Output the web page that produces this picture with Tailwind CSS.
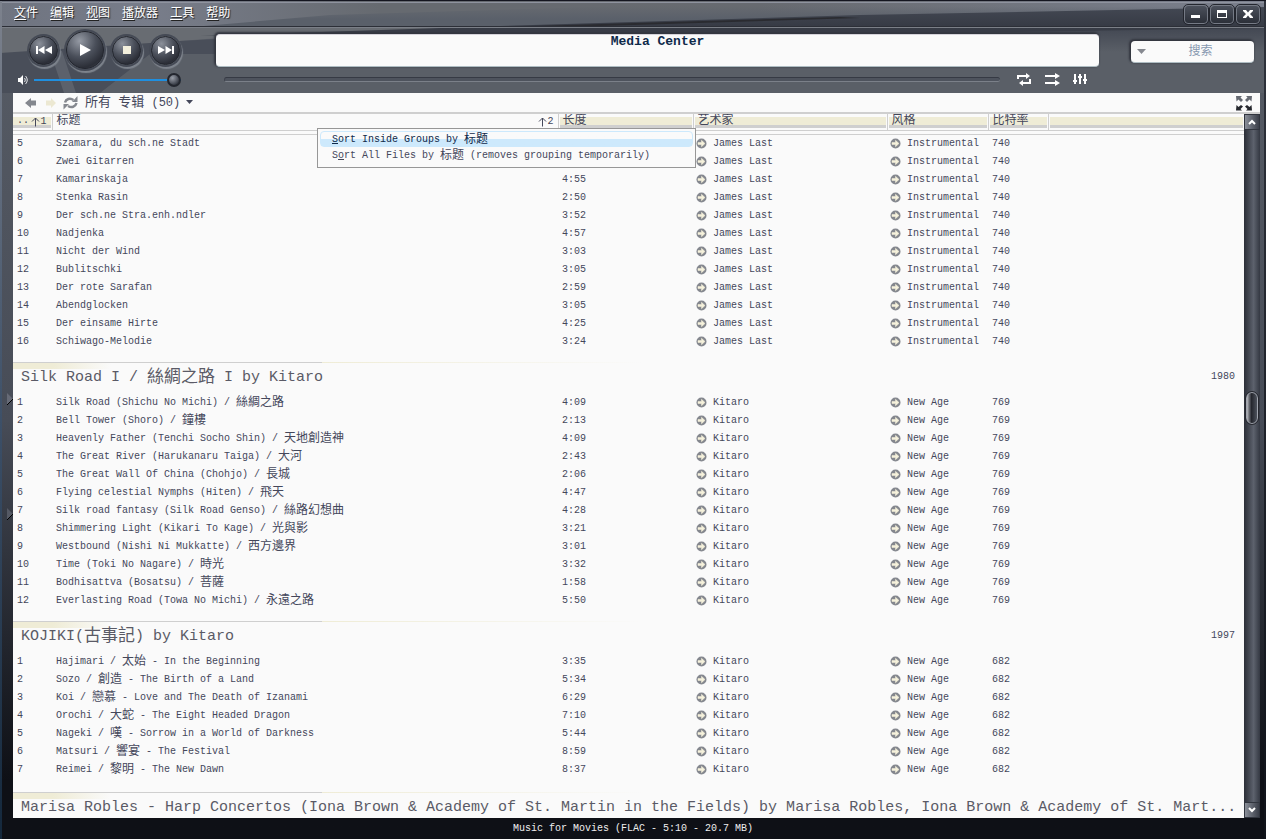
<!DOCTYPE html>
<html lang="zh-CN">
<head>
<meta charset="utf-8">
<title>Media Center</title>
<script src="https://cdn.jsdelivr.net/npm/@tailwindcss/browser@4"></script>
</head>
<body class="h-screen overflow-hidden bg-[#0e1016] font-['Liberation_Mono','Noto_Sans_CJK_SC',monospace] text-[10px] text-[#44475a]">
<div class="relative isolate flex h-full flex-col bg-linear-to-b from-[#585d66] via-[#474c57] via-50% to-[#0e1016] to-93% border-t border-[#14151f]">

  <svg class="absolute inset-x-0 top-0 -z-10 h-[92px] w-full" viewBox="0 0 1266 92" preserveAspectRatio="none" aria-hidden="true">
    <defs>
      <linearGradient id="sky" x1="0" x2="1" y1="0" y2="0"><stop offset="0" stop-color="#6f7480"/><stop offset=".12" stop-color="#787d8a"/><stop offset=".3" stop-color="#666a70"/><stop offset=".6" stop-color="#676a70"/><stop offset="1" stop-color="#7b808d"/></linearGradient>
      <linearGradient id="wedge" x1="0" x2="0" y1="0" y2="1"><stop offset="0" stop-color="#434853"/><stop offset=".7" stop-color="#363a44"/><stop offset="1" stop-color="#3d424c"/></linearGradient>
      <linearGradient id="glow" x1="0" x2="0" y1="0" y2="1"><stop offset="0" stop-color="#434853"/><stop offset="1" stop-color="#5a5f67"/></linearGradient>
      <linearGradient id="haze" x1="0" x2="0" y1="0" y2="1"><stop offset="0" stop-color="#5a606a" stop-opacity="0"/><stop offset=".6" stop-color="#5a606a"/></linearGradient>
    </defs>
    <rect width="1266" height="92" fill="#5a5f67"/>
    <rect width="1266" height="27" fill="url(#sky)"/>
    <polygon points="180,27 330,14 620,5 1266,5 1266,27" fill="url(#haze)"/>
    <polygon points="0,27 620,27 300,31 180,40 0,56" fill="#686c72"/>
    <polygon points="0,52 180,40 216,38 216,53 150,53 100,92 0,92" fill="#494e59"/>
    <polygon points="50,50 64,92 76,92 62,50" fill="#5c616b"/>
    <rect x="860" y="27" width="406" height="24" fill="url(#glow)"/>
    <polygon points="200,35 500,25 860,14 1266,6 1266,27 900,33" fill="url(#wedge)"/>
    <polygon points="500,26 840,16 860,17 600,25" fill="#2a2b30"/>
    <rect y="1" width="1266" height="1" fill="#8f939f"/>
    <rect y="25" width="1266" height="1" fill="#2c2f37"/>
    <rect y="26" width="1266" height="1" fill="#7b7f87"/>
  </svg>
  <div class="absolute inset-y-0 left-0 w-0.5 bg-linear-to-b from-[#7d828d] via-[#3d5068] to-[#14283c]"></div>
  <div class="absolute inset-y-0 right-0 w-0.5 bg-linear-to-b from-[#30343d] to-[#10131a]"></div>

  <header class="flex h-[26px] shrink-0 items-center justify-between pr-1.5 pl-3.5">
    <nav class="flex gap-3 text-[12px] leading-4 text-white [text-shadow:1px_1px_1px_#222]">
      <a href="#"><u class="underline-offset-2">文</u>件</a>
      <a href="#"><u class="underline-offset-2">编</u>辑</a>
      <a href="#"><u class="underline-offset-2">视</u>图</a>
      <a href="#"><u class="underline-offset-2">播</u>放器</a>
      <a href="#"><u class="underline-offset-2">工</u>具</a>
      <a href="#"><u class="underline-offset-2">帮</u>助</a>
    </nav>
    <div class="flex gap-0.5">
      <button aria-label="Minimize" class="flex h-[19px] w-6 items-center justify-center rounded-sm border border-[#757a85] bg-linear-to-b from-[#4c515c] to-[#2c3039] outline outline-[#23262e]"><svg width="12" height="12"><rect x="1" y="7" width="9" height="3" fill="#fff"/></svg></button>
      <button aria-label="Maximize" class="flex h-[19px] w-6 items-center justify-center rounded-sm border border-[#757a85] bg-linear-to-b from-[#4c515c] to-[#2c3039] outline outline-[#23262e]"><svg width="12" height="12"><path d="M1 2h10v8H1zM2 5V9h8V5z" fill="#fff" fill-rule="evenodd"/></svg></button>
      <button aria-label="Close" class="flex h-[19px] w-6 items-center justify-center rounded-sm border border-[#757a85] bg-linear-to-b from-[#4c515c] to-[#2c3039] outline outline-[#23262e]"><svg width="12" height="12"><path d="M1 2h3l2 2.500 2-2.500h3v1L8 6l3 3v1H8L6 7.500 4 10H1V9l3-3-3-3z" fill="#fff"/></svg></button>
    </div>
  </header>

  <section class="flex h-[66px] shrink-0 pr-3">
    <div class="w-[216px] shrink-0">
      <div class="flex h-[44px] items-center gap-2 pt-0.5 pl-[29px]">
        <button aria-label="Previous" class="flex size-[29px] items-center justify-center rounded-full border border-[#23262e] bg-[radial-gradient(circle_at_35%_25%,#8b909a,#4a4f5a_45%,#2b2e37_75%,#4c515b)] shadow-[0_0_0_2px_#454a55,1px_2px_1px_2px_#7e848d]"><svg width="18" height="10" fill="#fff"><path d="M1 1h2v8H1zM9.500 1v8L3 5zM17 1v8L10 5z"/></svg></button>
        <button aria-label="Play" class="flex size-[38px] items-center justify-center rounded-full border border-[#23262e] bg-[radial-gradient(circle_at_35%_25%,#959aa4,#4a4f5a_45%,#2b2e37_75%,#50555f)] shadow-[0_0_0_2px_#454a55,1px_2px_1px_2px_#7e848d]"><svg width="14" height="14" fill="#fff"><path d="M2 1l11 6-11 6z"/></svg></button>
        <button aria-label="Stop" class="flex size-[29px] items-center justify-center rounded-full border border-[#23262e] bg-[radial-gradient(circle_at_35%_25%,#8b909a,#4a4f5a_45%,#2b2e37_75%,#4c515b)] shadow-[0_0_0_2px_#454a55,1px_2px_1px_2px_#7e848d]"><svg width="8" height="8"><rect width="8" height="8" fill="#f3efdc"/></svg></button>
        <button aria-label="Next" class="ml-0.5 flex size-[29px] items-center justify-center rounded-full border border-[#23262e] bg-[radial-gradient(circle_at_35%_25%,#8b909a,#4a4f5a_45%,#2b2e37_75%,#4c515b)] shadow-[0_0_0_2px_#454a55,1px_2px_1px_2px_#7e848d]"><svg width="18" height="10" fill="#fff"><path d="M1 1v8l7-4zM8.500 1v8L15 5zM15 1h2v8h-2z"/></svg></button>
      </div>
      <div class="flex h-[18px] items-center gap-1.5 pl-[17px]">
        <svg width="11" height="12" aria-hidden="true"><path d="M1 4h2l3-3v10L3 8H1z" fill="#fff"/><path d="M7.500 4c1 1.500 1 2.500 0 4M8.500 2c2.300 2.500 2.300 5.500 0 8" fill="none" stroke="#e3e4e8"/></svg>
        <input type="range" aria-label="Volume" value="100" class="h-3.5 w-[147px] appearance-none bg-transparent [&::-webkit-slider-runnable-track]:h-0.5 [&::-webkit-slider-runnable-track]:bg-[#1f8fe0] [&::-webkit-slider-thumb]:-mt-1.5 [&::-webkit-slider-thumb]:size-3.5 [&::-webkit-slider-thumb]:appearance-none [&::-webkit-slider-thumb]:rounded-full [&::-webkit-slider-thumb]:border-2 [&::-webkit-slider-thumb]:border-[#23262e] [&::-webkit-slider-thumb]:bg-[radial-gradient(circle_at_35%_30%,#9a9fa9,#3c404a_70%)]">
      </div>
    </div>
    <div class="flex min-w-0 flex-1 flex-col pt-[7px]">
      <div class="h-[33px] rounded-sm border-t border-b border-t-[#d5d3da] border-b-[#aebcc2] bg-[#fafafa] text-center text-[13px] leading-[14px] font-bold text-[#0f2a4a] shadow-[-1px_-1px_2px_1px_#33363f]">Media Center</div>
      <div class="flex h-6 items-center pr-3 pl-2">
        <input type="range" aria-label="Position" value="0" class="h-[5px] min-w-0 flex-1 appearance-none rounded-sm border-t border-b border-l border-t-[#363a44] border-b-[#7b8089] border-l-[#3f434d] bg-[#4e535d] [&::-webkit-slider-thumb]:size-0 [&::-webkit-slider-thumb]:appearance-none">
        <div class="ml-4 flex gap-3">
          <button aria-label="Repeat"><svg class="block" width="17" height="14" fill="none" stroke="#fff" stroke-width="2"><path d="M2 7V4h9M14 7v4H6"/><path d="M10 1l4 3-4 3zM7 8v6l-4-3z" fill="#fff" stroke="none"/></svg></button>
          <button aria-label="Shuffle"><svg class="block" width="16" height="14" fill="#fff"><path d="M0 3h10V1l5 3-5 3V5H0zM0 10h10V8l5 3-5 3v-2H0z"/></svg></button>
          <button aria-label="Equalizer"><svg class="block" width="14" height="12" fill="#fff"><path d="M1 1h2v6h1v2H3v2H1V9H0V7h1zM6 11V5H5V3h1V1h2v2h1v2H8v6zM11 11V8h-1V6h1V1h2v5h1v2h-1v3z"/></svg></button>
        </div>
      </div>
    </div>
    <div class="ml-8 w-[123px] pt-[14px]">
      <div class="flex h-[22px] items-center rounded-sm border-b border-[#aebcc2] bg-[#fafafa] pl-1.5 shadow-[-1px_-1px_2px_1px_#33363f]">
        <svg width="10" height="6" aria-hidden="true"><path d="M0 0h9L4.500 5z" fill="#85888f"/></svg>
        <input type="text" aria-label="搜索" placeholder="搜索" class="min-w-0 flex-1 bg-transparent text-center text-[12px] placeholder:text-[#8798b0]">
      </div>
    </div>
  </section>

  <main class="mr-1.5 ml-[13px] flex min-h-0 flex-1 flex-col bg-[#fafafa]">
    <div class="flex h-[19px] shrink-0 items-center justify-between pr-[7px] pl-3">
      <div class="flex items-center">
        <button aria-label="Back"><svg class="block" width="12" height="10"><path d="M0 5l6-5v2.500h5v5H6V10z" fill="#84878e"/></svg></button>
        <button aria-label="Forward" class="ml-2"><svg class="block" width="12" height="10"><path d="M11 5L6 0v2.500H1v5h5V10z" fill="#ece8d2"/></svg></button>
        <button aria-label="Refresh" class="ml-1.5"><svg class="block" width="16" height="14" fill="none" stroke="#85888f" stroke-width="2.500"><path d="M2 6.500C3 3 7 1.500 10.500 4M13.500 7c-1 4-5 5-8.500 3"/><path d="M14.500 0v6H9zM0.500 13.500V8H6z" fill="#85888f" stroke="none"/></svg></button>
        <button class="ml-1.5 flex items-center gap-1.5 text-[12px] leading-4"><span><span class="text-[13px]">所有</span> <span class="text-[13px]">专辑</span> (50)</span><svg width="8" height="5"><path d="M0 0h7L3.500 4z" fill="#44475a"/></svg></button>
      </div>
      <button aria-label="Full screen"><svg class="block" width="17" height="16"><path d="M0 1h6L4.500 2.500 7 5 5 7 2.500 4.500 0.500 6.500zM16 1h-6l1.500 1.500L9 5l2 2 2.500-2.500 2 2z" fill="#666a72"/><path d="M0 15.500h6L4.500 14 7 11.500 5 10l-2.500 2L0.500 10zM16 15.500h-6l1.500-1.500L9 11.500l2-1.500 2.500 2 2-2z" fill="#25272d"/></svg></button>
    </div>

    <div class="relative flex min-h-0 flex-1 border-t-2 border-[#cfcfcf]">
      <div class="min-w-0 flex-1 overflow-hidden">
        <table class="w-full table-fixed border-collapse text-left">
          <colgroup><col class="w-[39px]"><col class="w-[506px]"><col class="w-[135px]"><col class="w-[194px]"><col class="w-[101px]"><col class="w-[60px]"><col></colgroup>
          <thead class="text-[12px] leading-[14px]">
            <tr class="h-4 border-b border-[#cfcfcf]">
              <th class="border-r border-[#cfcfcf] p-0 align-top font-normal"><div class="mr-px flex h-4 justify-between bg-[linear-gradient(transparent_3px,#efecd6_3px,#efecd6_11px,#cfcfcf_11px,#cfcfcf_14px,transparent_14px)] pr-1 pl-1 text-[10px]"><span>..</span><span class="flex h-4 items-center"><svg width="9" height="10" fill="none" stroke="#44475a"><path d="M4.500 9.500V1M1 4.500L4.500 1 8 4.500"/></svg>1</span></div></th>
              <th class="border-r border-[#cfcfcf] p-0 align-top font-normal"><div class="flex h-4 justify-between pr-1 pl-1"><span>标题</span><span class="flex items-center text-[10px]"><svg width="9" height="10" fill="none" stroke="#44475a"><path d="M4.500 9.500V1M1 4.500L4.500 1 8 4.500"/></svg>2</span></div></th>
              <th class="border-r border-[#cfcfcf] p-0 align-top font-normal"><div class="mx-px h-4 bg-[linear-gradient(transparent_3px,#efecd6_3px,#efecd6_11px,#cfcfcf_11px,#cfcfcf_14px,transparent_14px)] pl-[3px]">长度</div></th>
              <th class="border-r border-[#cfcfcf] p-0 align-top font-normal"><div class="mx-px h-4 bg-[linear-gradient(transparent_3px,#efecd6_3px,#efecd6_11px,#cfcfcf_11px,#cfcfcf_14px,transparent_14px)] pl-[3px]">艺术家</div></th>
              <th class="border-r border-[#cfcfcf] p-0 align-top font-normal"><div class="mx-px h-4 bg-[linear-gradient(transparent_3px,#efecd6_3px,#efecd6_11px,#cfcfcf_11px,#cfcfcf_14px,transparent_14px)] pl-[3px]">风格</div></th>
              <th class="border-r border-[#cfcfcf] p-0 align-top font-normal"><div class="mx-px h-4 bg-[linear-gradient(transparent_3px,#efecd6_3px,#efecd6_11px,#cfcfcf_11px,#cfcfcf_14px,transparent_14px)] pl-[3px]">比特率</div></th>
              <th class="p-0 align-top font-normal"><div class="mx-px h-4 bg-[linear-gradient(transparent_3px,#efecd6_3px,#efecd6_11px,#cfcfcf_11px,#cfcfcf_14px,transparent_14px)]"></div></th>
            </tr>
            <tr class="h-1 border-b border-[#cfcfcf]"><td colspan="7" class="p-0"></td></tr>
          </thead>
          <tbody id="tracks"></tbody>
        </table>
      </div>

      <div class="flex w-4 shrink-0 flex-col bg-linear-to-r from-[#2b2e37] via-[#5d626d] via-60% to-[#343842]">
        <button aria-label="Scroll up" class="flex h-4 items-center justify-center border border-[#31353e] bg-linear-to-r from-[#8a8f99] to-[#3a3e48]"><svg width="8" height="6" fill="none" stroke="#fff" stroke-width="2"><path d="M1 5l3-3 3 3"/></svg></button>
        <div class="h-[262px]"></div>
        <div class="mx-0.5 h-8 rounded-md border border-[#a0a4ad] bg-linear-to-r from-[#b8bac0] via-[#25272e] via-45% to-[#4d525c] outline outline-[#25272e]"></div>
        <button aria-label="Scroll down" class="mt-auto flex h-4 items-center justify-center border border-[#31353e] bg-linear-to-r from-[#8a8f99] to-[#3a3e48]"><svg width="8" height="6" fill="none" stroke="#fff" stroke-width="2"><path d="M1 1l3 3 3-3"/></svg></button>
      </div>

      <div role="menu" class="absolute top-[14px] left-[304px] w-[379px] border border-[#979797] bg-[#fafafa] px-0.5 py-0.5">
        <button role="menuitem" class="block h-4 w-full rounded-sm border border-[#cde9fc] bg-linear-to-b from-[#fafafa] from-50% to-[#cde9fc] to-50% pl-[11px] text-left leading-4 text-[#0f2a4a]"><u>S</u>ort Inside Groups by <span class="align-[-1px] text-[12px] leading-3">标题</span></button>
        <button role="menuitem" class="block h-[18px] w-full pl-3 text-left leading-[18px]">S<u>o</u>rt All Files by <span class="align-[-1px] text-[12px] leading-3">标题</span> (removes grouping temporarily)</button>
      </div>
    </div>
  </main>

  <footer class="h-[21px] shrink-0 text-center leading-[22px] text-[#eeeeee]">Music for Movies (FLAC - 5:10 - 20.7 MB)</footer>

  <svg class="absolute top-[392px] left-[7px]" width="6" height="13" aria-hidden="true"><path d="M0 0v12l6-6z" fill="#666a76"/><path d="M0 12l6-6" stroke="#000"/></svg>
  <svg class="absolute top-[507px] left-[7px]" width="6" height="13" aria-hidden="true"><path d="M0 0v12l6-6z" fill="#555964"/><path d="M0 12l6-6" stroke="#000"/></svg>
</div>

<script>
const groups = [
  { artist: 'James Last', genre: 'Instrumental', rate: 740, first: 5, tracks: [
    ['Szamara, du sch.ne Stadt', ''], ['Zwei Gitarren', ''], ['Kamarinskaja', '4:55'], ['Stenka Rasin', '2:50'],
    ['Der sch.ne Stra.enh.ndler', '3:52'], ['Nadjenka', '4:57'], ['Nicht der Wind', '3:03'], ['Bublitschki', '3:05'],
    ['Der rote Sarafan', '2:59'], ['Abendglocken', '3:05'], ['Der einsame Hirte', '4:25'], ['Schiwago-Melodie', '3:24']] },
  { title: 'Silk Road I / 絲綢之路 I by Kitaro', year: '1980', artist: 'Kitaro', genre: 'New Age', rate: 769, first: 1, gap: 'h-[11px]', tracks: [
    ['Silk Road (Shichu No Michi) / 絲綢之路', '4:09'], ['Bell Tower (Shoro) / 鐘樓', '2:13'],
    ['Heavenly Father (Tenchi Socho Shin) / 天地創造神', '4:09'], ['The Great River (Harukanaru Taiga) / 大河', '2:43'],
    ['The Great Wall Of China (Chohjo) / 長城', '2:06'], ['Flying celestial Nymphs (Hiten) / 飛天', '4:47'],
    ['Silk road fantasy (Silk Road Genso) / 絲路幻想曲', '4:28'], ['Shimmering Light (Kikari To Kage) / 光與影', '3:21'],
    ['Westbound (Nishi Ni Mukkatte) / 西方邊界', '3:01'], ['Time (Toki No Nagare) / 時光', '3:32'],
    ['Bodhisattva (Bosatsu) / 菩薩', '1:58'], ['Everlasting Road (Towa No Michi) / 永遠之路', '5:50']] },
  { title: 'KOJIKI(古事記) by Kitaro', year: '1997', artist: 'Kitaro', genre: 'New Age', rate: 682, first: 1, gap: 'h-[11px]', tracks: [
    ['Hajimari / 太始 - In the Beginning', '3:35'], ['Sozo / 創造 - The Birth of a Land', '5:34'],
    ['Koi / 戀慕 - Love and The Death of Izanami', '6:29'], ['Orochi / 大蛇 - The Eight Headed Dragon', '7:10'],
    ['Nageki / 嘆 - Sorrow in a World of Darkness', '5:44'], ['Matsuri / 響宴 - The Festival', '8:59'],
    ['Reimei / 黎明 - The New Dawn', '8:37']] },
  { title: 'Marisa Robles - Harp Concertos (Iona Brown &amp; Academy of St. Martin in the Fields) by Marisa Robles, Iona Brown &amp; Academy of St. Mart...', year: '', gap: 'h-[13px]', tracks: [] }
];
const han = (s, cls) => s.replace(/[\u3400-\u9fff]+/g, m => `<span class="${cls}">${m}</span>`);
const go = '<svg class="mr-1.5 inline-block align-middle" width="11" height="11" aria-hidden="true"><circle cx="5.500" cy="5.500" r="5" fill="#84878e"/><path d="M2 4.500h3.500V2.300L9 5.500 5.500 8.700V6.500H2z" fill="#f6f2dc" stroke="#f6f2dc" stroke-width=".5"/></svg>';
let html = '';
groups.forEach(g => {
  if (g.title) {
    html += `<tr><td colspan="7" class="${g.gap} p-0"></td></tr>
    <tr><td colspan="7" class="p-0"><div class="h-px bg-linear-to-r from-[#cfcfcf] from-[309px] via-[#efecd6] via-[309px] to-transparent to-[631px]"></div>
    <div class="flex h-[31px] items-center justify-between bg-[linear-gradient(90deg,#efecd6_40px,transparent)] bg-[length:98px_6px] bg-no-repeat pr-[9px] pb-0.5 pl-2">
    <span class="text-[15px] leading-5 whitespace-nowrap text-[#5a5a66]">${han(g.title, 'align-[-1px] text-[17px] leading-4')}</span><span class="pb-0.5">${g.year}</span></div></td></tr>`;
  }
  g.tracks.forEach(([t, len], i) => {
    html += `<tr class="h-[18px] leading-[18px] whitespace-nowrap"><td class="p-0 pl-1">${g.first + i}</td><td class="p-0 pl-1">${han(t, 'align-[-1px] text-[12px] leading-3')}</td><td class="p-0 pl-1">${len}</td><td class="p-0 pl-[3px]">${go}${g.artist}</td><td class="p-0 pl-[3px]">${go}${g.genre}</td><td class="p-0 pl-1">${g.rate}</td><td></td></tr>`;
  });
});
document.getElementById('tracks').innerHTML = html;
</script>
</body>
</html>
